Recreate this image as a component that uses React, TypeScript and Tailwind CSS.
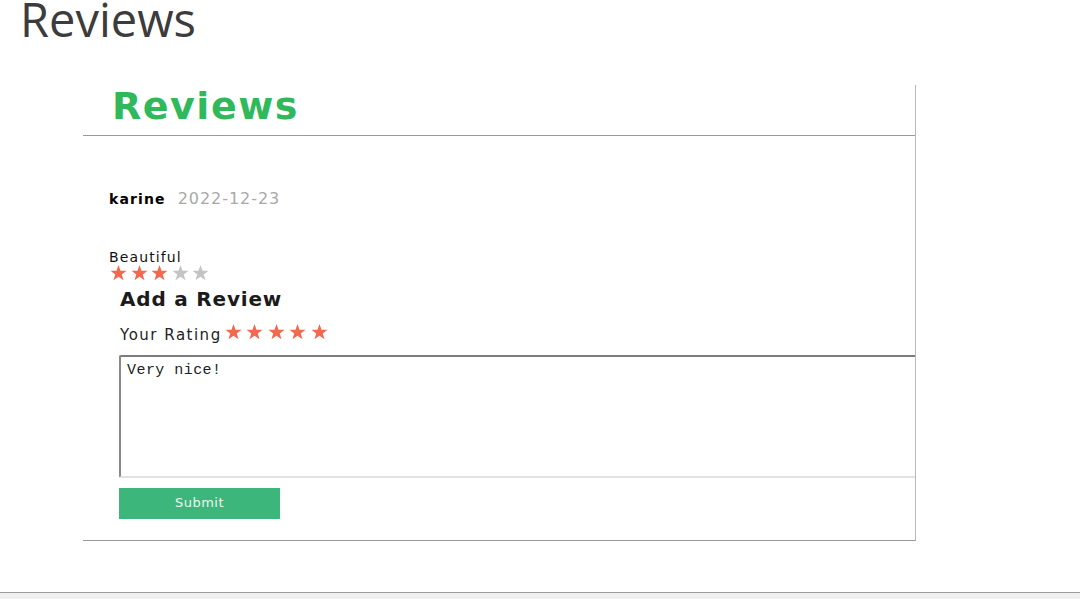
import React from 'react';

const Star = ({ on }: { on: boolean }) => (
  <svg width="17" height="16" viewBox="0 0 24 23" className={on ? 'fill-[#f2694f]' : 'fill-[#c4c4c4]'}>
    <path d="M12 0l2.9 8.1 8.6.2-6.8 5.3 2.5 8.3L12 17l-7.2 4.9 2.5-8.3L.5 8.3l8.6-.2z" />
  </svg>
);

const Stars = ({ value, gap }: { value: number; gap: string }) => (
  <div className={`flex ${gap}`}>
    {[1, 2, 3, 4, 5].map((n) => (
      <Star key={n} on={n <= value} />
    ))}
  </div>
);

const App = () => {
  return (
    <div className="flex h-[599px] flex-col overflow-hidden bg-white">
      {/* page title */}
      <h1 className="pl-5 font-['Open_Sans',sans-serif] text-[47px] leading-[38px] text-[#3c3c3c]">
        Reviews
      </h1>

      {/* review widget */}
      <div className="ml-[83px] mt-[47px] h-[456px] w-[833px] overflow-hidden border-b border-r border-b-[#9a9a9a] border-r-[#b8b8b8] font-['DejaVu_Sans',sans-serif]">
        <div className="h-[51px] border-b border-[#9a9a9a] pl-[29px]">
          <h2 className="text-[38px] font-bold leading-[42px] tracking-[0.04em] text-[#2fb95b]">Reviews</h2>
        </div>

        <div className="pl-[26px]">
          <div className="mt-[51px] flex items-baseline gap-[12px]">
            <span className="text-[14px] font-bold tracking-[0.08em] text-black">karine</span>
            <span className="text-[16px] tracking-[0.06em] text-[#a9a9a9]">2022-12-23</span>
          </div>

          <p className="mt-[38px] text-[14px] leading-[16px] tracking-[0.08em] text-[#111]">Beautiful</p>
          <div className="ml-[1px]">
            <Stars value={3} gap="gap-[3.5px]" />
          </div>

          <div className="pl-[11px]">
            <h3 className="mt-[6px] text-[20px] font-bold leading-[24px] tracking-[0.04em] text-[#1b1b1b]">Add a Review</h3>
            <div className="mt-[13px] flex items-center">
              <span className="text-[15px] tracking-[0.1em] text-[#222]">Your Rating</span>
              <div className="mt-[-6px] ml-[3px]">
                <Stars value={5} gap="gap-[4.5px]" />
              </div>
            </div>

            <textarea
              defaultValue="Very nice!"
              className="mt-[8px] ml-[-1px] block h-[123px] w-[860px] resize-none rounded-[2px] border-2 border-b-[#e2e2e2] border-l-[#8a8a8a] border-r-[#e2e2e2] border-t-[#7c7c7c] px-[6px] py-[5px] font-['Liberation_Mono',monospace] text-[15px] leading-[18px] tracking-[0.03em] text-[#222] outline-none"
            />

            <button className="mt-[10px] ml-[-1px] block h-[31px] w-[161px] bg-[#3db67b] text-[13px] tracking-[0.04em] text-[#eaf7ef]">
              Submit
            </button>
          </div>
        </div>
      </div>

      {/* window bottom edge */}
      <div className="mt-auto h-[7px] border-t border-[#9a9a9a] bg-[#efefef]" />
    </div>
  );
};

export default App;
